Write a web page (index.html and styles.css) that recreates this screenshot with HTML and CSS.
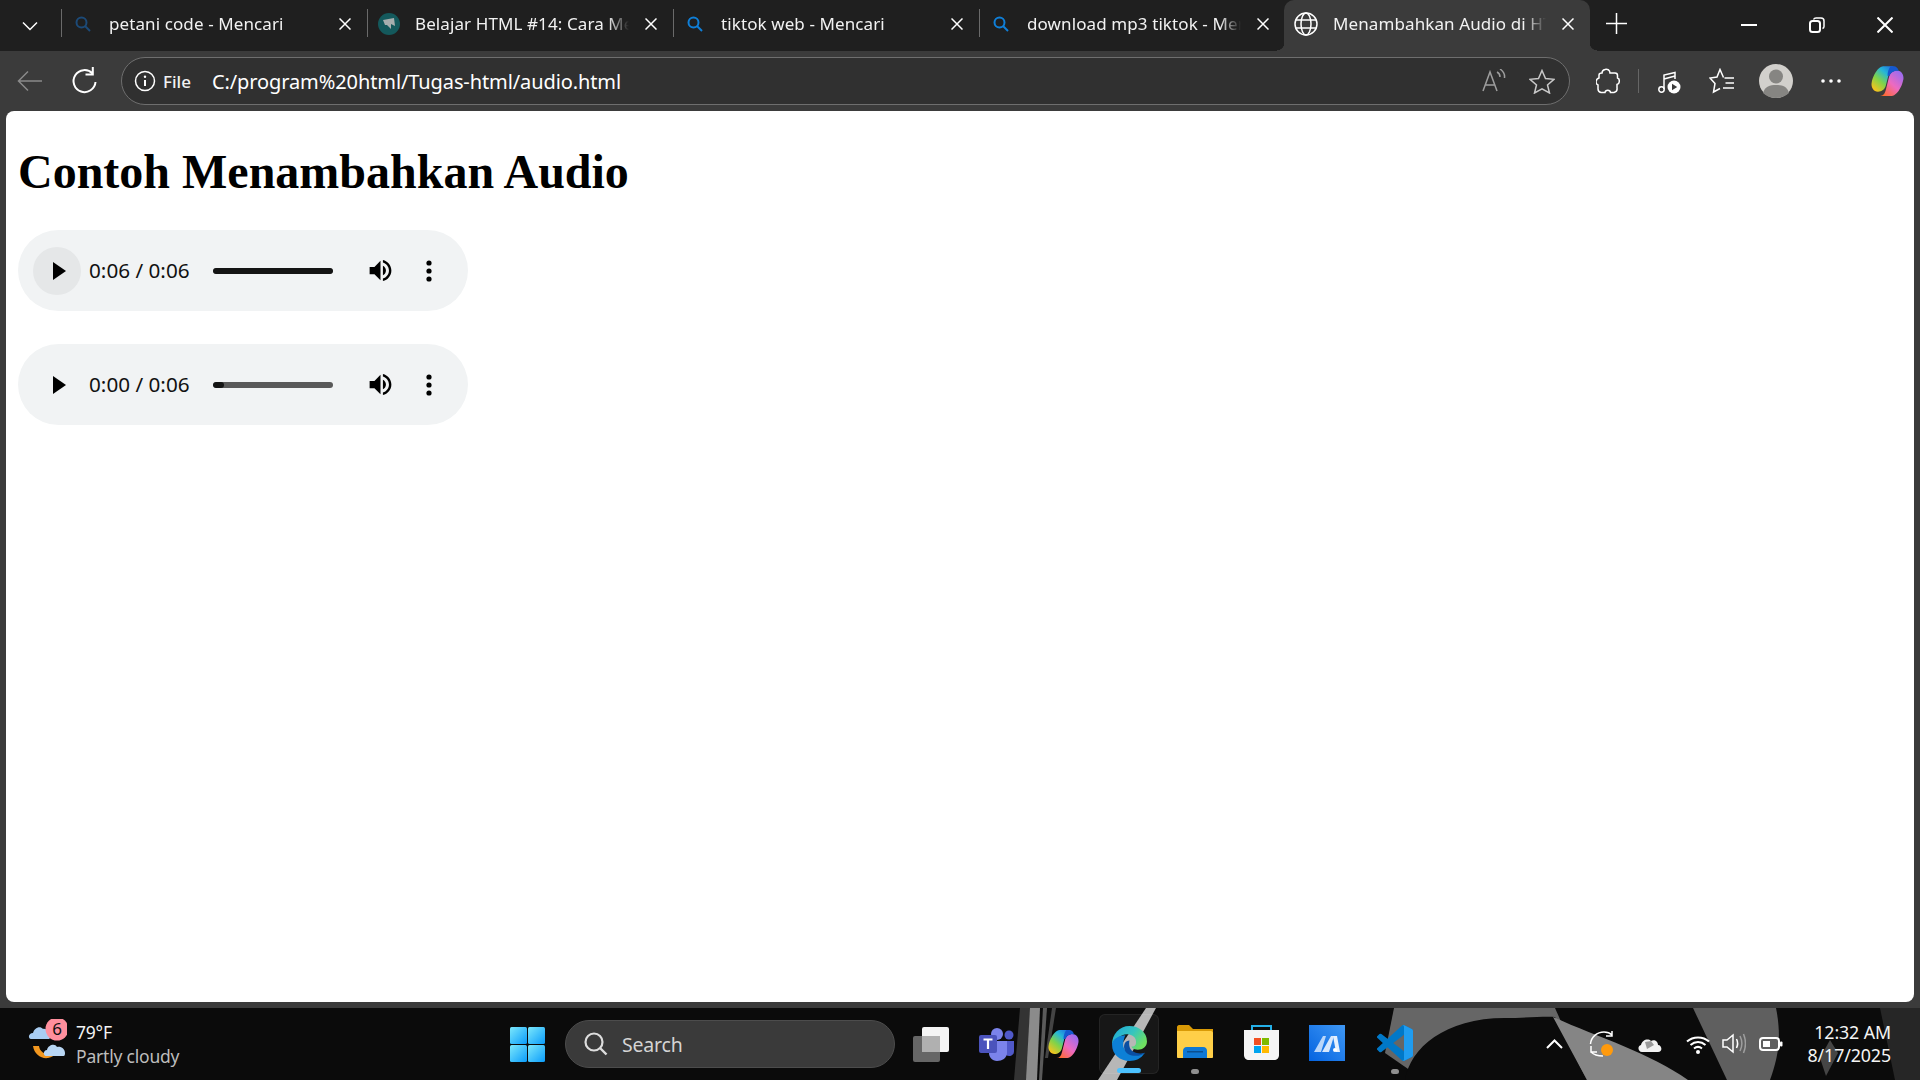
FILE: index.html
```html
<!DOCTYPE html>
<html lang="en">
<head>
<meta charset="utf-8">
<title>Menambahkan Audio di HTML</title>
<link rel="stylesheet" href="styles.css">
</head>
<body>
<svg class="defs" width="0" height="0" aria-hidden="true">
  <defs>
    <linearGradient id="cpA" x1="0.85" y1="0" x2="0.1" y2="0.95">
      <stop offset="0" stop-color="#1f6fe0"/><stop offset="0.3" stop-color="#25b6d8"/><stop offset="0.62" stop-color="#7fd34a"/><stop offset="1" stop-color="#ffc21a"/>
    </linearGradient>
    <linearGradient id="cpB" x1="0.9" y1="0.1" x2="0.15" y2="1">
      <stop offset="0" stop-color="#9a6cf0"/><stop offset="0.5" stop-color="#ee6ac0"/><stop offset="1" stop-color="#ff6a2a"/>
    </linearGradient>
    <linearGradient id="edA" x1="0" y1="0" x2="1" y2="0.6">
      <stop offset="0" stop-color="#1ba6dc"/><stop offset="0.55" stop-color="#35c4c0"/><stop offset="1" stop-color="#6fe060"/>
    </linearGradient>
    <linearGradient id="winG" x1="0" y1="0" x2="1" y2="1">
      <stop offset="0" stop-color="#7ce8fb"/><stop offset="1" stop-color="#0a9cfb"/>
    </linearGradient>
    <linearGradient id="maG" x1="1" y1="0" x2="0" y2="1">
      <stop offset="0" stop-color="#3f98f5"/><stop offset="1" stop-color="#0463e0"/>
    </linearGradient>
    <symbol id="copilot" viewBox="0 0 32 32">
      <path fill="url(#cpA)" d="M12 2H23C20 2 18.500 4 17.500 8L14.500 20C13.500 24 10.500 26 7 26C3 26 .5 22 1 18C2 12 5 7 7.500 4.500C9 3 10.500 2 12 2Z"/>
      <path fill="url(#cpB)" d="M20 30H9C12 30 13.500 28 14.500 24L17.500 12C18.500 8 21.500 6 25 6C29 6 31.500 10 31 14C30 20 27 25 24.500 27.500C23 29 21.500 30 20 30Z"/>
      <path fill="#1558cf" d="M19 2H21C24.500 2 26 4 26.500 6.500C22.500 5.500 19 8 18 11L16 11C16 8 17 4 19 2Z"/>
    </symbol>
  </defs>
</svg>

<div class="browser">
  <header class="tabstrip">
    <div class="tabmenu">
      <svg width="16" height="10" viewBox="0 0 16 10"><path d="M1 1.500 8 8.500 15 1.500" class="ln"/></svg>
    </div>
    <div class="tab">
      <svg class="favicon" viewBox="0 0 16 16"><circle cx="6.500" cy="6.500" r="5" class="srch dim"/><path d="M10 10 15 15" class="srch dim"/></svg>
      <span class="tab-title">petani code - Mencari</span>
      <svg class="tab-x" viewBox="0 0 12 12"><path d="M.5.500 11.500 11.500M11.500.500.500 11.500" class="ln"/></svg>
    </div>
    <div class="tab">
      <svg class="favicon favicon-wide" viewBox="0 0 22 22"><circle cx="11" cy="11" r="11" fill="#14595c"/><path d="M5 7 16 5 17 13 13 11 13 16 9 12 7 12Z" fill="#a7aeae"/></svg>
      <span class="tab-title">Belajar HTML #14: Cara Menambahkan</span>
      <svg class="tab-x" viewBox="0 0 12 12"><path d="M.5.500 11.500 11.500M11.500.500.500 11.500" class="ln"/></svg>
    </div>
    <div class="tab">
      <svg class="favicon" viewBox="0 0 16 16"><circle cx="6.500" cy="6.500" r="5" class="srch"/><path d="M10 10 15 15" class="srch"/></svg>
      <span class="tab-title">tiktok web - Mencari</span>
      <svg class="tab-x" viewBox="0 0 12 12"><path d="M.5.500 11.500 11.500M11.500.500.500 11.500" class="ln"/></svg>
    </div>
    <div class="tab">
      <svg class="favicon" viewBox="0 0 16 16"><circle cx="6.500" cy="6.500" r="5" class="srch"/><path d="M10 10 15 15" class="srch"/></svg>
      <span class="tab-title">download mp3 tiktok - Mencari</span>
      <svg class="tab-x" viewBox="0 0 12 12"><path d="M.5.500 11.500 11.500M11.500.500.500 11.500" class="ln"/></svg>
    </div>
    <div class="tab tab-active">
      <svg class="favicon favicon-globe" viewBox="0 0 24 24"><circle cx="12" cy="12" r="11" class="ln"/><ellipse cx="12" cy="12" rx="5" ry="11" class="ln"/><path d="M1.800 8H22.200M1.800 16H22.200" class="ln"/></svg>
      <span class="tab-title">Menambahkan Audio di HTML</span>
      <svg class="tab-x" viewBox="0 0 12 12"><path d="M.5.500 11.500 11.500M11.500.500.500 11.500" class="ln"/></svg>
    </div>
    <div class="newtab">
      <svg width="21" height="21" viewBox="0 0 21 21"><path d="M10.500 0V21M0 10.500H21" class="ln"/></svg>
    </div>
    <div class="winctl">
      <button class="winbtn"><svg width="16" height="16" viewBox="0 0 16 16"><path d="M0 8H16" class="ln ln2"/></svg></button>
      <button class="winbtn"><svg width="16" height="16" viewBox="0 0 16 16"><rect x="1" y="4" width="10" height="11" rx="2.500" class="ln ln2"/><path d="M4.500 2.500C5 1.500 5.800 1 7 1H12C13.800 1 15 2.200 15 4V9.500C15 10.500 14.500 11.200 13.500 11.500" class="ln"/></svg></button>
      <button class="winbtn"><svg width="16" height="16" viewBox="0 0 16 16"><path d="M.5.500 15.500 15.500M15.500.500.500 15.500" class="ln ln2"/></svg></button>
    </div>
  </header>

  <nav class="toolbar">
    <button class="tool tool-back"><svg width="26" height="22" viewBox="0 0 26 22"><path d="M25 11H2M11 1.500 1.500 11 11 20.500" class="ln dimln"/></svg></button>
    <button class="tool tool-reload"><svg width="26" height="28" viewBox="0 0 26 28"><path d="M21.500 6.500A11 11 0 1 0 24.500 15" class="ln ln2"/><path d="M21.800 0V7.500H14.500" class="ln ln2"/></svg></button>
    <div class="omnibox">
      <svg class="info" width="22" height="22" viewBox="0 0 22 22"><circle cx="11" cy="11" r="9.500" class="ln"/><path d="M11 10V16" class="ln ln2"/><circle cx="11" cy="6.800" r="1.200" fill="#fff"/></svg>
      <span class="scheme">File</span>
      <span class="url">C:/program%20html/Tugas-html/audio.html</span>
      <svg class="omni-read" width="24" height="24" viewBox="0 0 24 24"><path d="M1 22 8 3 15 22M3.500 16H12.500" class="ln faint"/><path d="M15 3C17 4 18 6 18 8M18 0C21 2 23 5 22.500 9" class="ln faint"/></svg>
      <svg class="omni-star" width="26" height="25" viewBox="0 0 26 25"><path d="M13 1.500 16.500 9.500 25 10.300 18.500 16 20.500 24 13 19.800 5.500 24 7.500 16 1 10.300 9.500 9.500Z" class="ln faint2"/></svg>
    </div>
    <div class="tools-right">
      <button class="tool"><svg width="24" height="26" viewBox="0 0 24 26"><path d="M9 1.500C11 .5 14 2 14 5H19C20.500 5 21.500 6 21.500 7.500V10C24 10.500 24 16 21 16.500V20C21.500 23 20 24 18 24.500H14.500C14 21.500 9.500 21.500 9 24.500H5C3 24 2 23 2 21V17C-1 15.500 -.5 11 3 10V7C3 5.500 4 5 6 5 6 3.500 7 2 9 1.500Z" class="ln"/></svg></button>
      <span class="tool-sep"></span>
      <button class="tool"><svg width="25" height="25" viewBox="0 0 25 25"><path d="M7 20V6L18 3.500V10M7 10 18 7" class="ln"/><circle cx="4.500" cy="20.500" r="2.700" class="ln"/><circle cx="17" cy="18" r="6.500" fill="#fff"/><path d="M15 14.800V21.200L20.200 18Z" fill="#3b3b3b"/></svg></button>
      <button class="tool"><svg width="26" height="26" viewBox="0 0 26 26"><path d="M14.500 9.500 11 1.500 8 9 1 10 6 15.500 4.500 24 11 20.500" class="ln"/><path d="M15.500 10H25M16.500 15H25M14 20H25" class="ln"/></svg></button>
      <div class="avatar"><svg width="34" height="34" viewBox="0 0 34 34"><circle cx="17" cy="17" r="17" fill="#d2d0cc"/><circle cx="17" cy="12.500" r="7" fill="#868582"/><path d="M4 29C6 22 11 21 17 21S28 22 30 29C27 32 22 34 17 34S7 32 4 29Z" fill="#868582"/></svg></div>
      <button class="tool tool-more"><svg width="20" height="4" viewBox="0 0 20 4"><circle cx="2" cy="2" r="1.800" fill="#fff"/><circle cx="10" cy="2" r="1.800" fill="#fff"/><circle cx="18" cy="2" r="1.800" fill="#fff"/></svg></button>
      <svg class="tool-copilot" width="35" height="34"><use href="#copilot"/></svg>
    </div>
  </nav>

  <main class="page">
    <h1 class="heading">Contoh Menambahkan Audio</h1>
    <div class="player">
      <span class="play play-hover"><svg width="13" height="18" viewBox="0 0 13 18"><path d="M0 0 13 9 0 18Z"/></svg></span>
      <span class="time">0:06 / 0:06</span>
      <span class="track"><span class="fill fill-full"></span></span>
      <svg class="vol" width="29" height="29" viewBox="0 0 24 24"><path d="M3 9v6h4l5 5V4L7 9H3zm13.500 3c0-1.770-1.020-3.290-2.500-4.030v8.050c1.480-.73 2.500-2.250 2.500-4.020zM14 3.230v2.060c2.890.86 5 3.540 5 6.710s-2.110 5.850-5 6.710v2.060c4.010-.91 7-4.490 7-8.770s-2.990-7.860-7-8.770z"/></svg>
      <svg class="kebab" width="8" height="22" viewBox="0 0 8 22"><circle cx="4" cy="3" r="2.600"/><circle cx="4" cy="11" r="2.600"/><circle cx="4" cy="19" r="2.600"/></svg>
    </div>
    <div class="player">
      <span class="play"><svg width="13" height="18" viewBox="0 0 13 18"><path d="M0 0 13 9 0 18Z"/></svg></span>
      <span class="time">0:00 / 0:06</span>
      <span class="track"><span class="fill fill-start"></span></span>
      <svg class="vol" width="29" height="29" viewBox="0 0 24 24"><path d="M3 9v6h4l5 5V4L7 9H3zm13.500 3c0-1.770-1.020-3.290-2.500-4.030v8.050c1.480-.73 2.500-2.250 2.500-4.020zM14 3.230v2.060c2.890.86 5 3.540 5 6.710s-2.110 5.850-5 6.710v2.060c4.010-.91 7-4.490 7-8.770s-2.990-7.860-7-8.770z"/></svg>
      <svg class="kebab" width="8" height="22" viewBox="0 0 8 22"><circle cx="4" cy="3" r="2.600"/><circle cx="4" cy="11" r="2.600"/><circle cx="4" cy="19" r="2.600"/></svg>
    </div>
  </main>
</div>

<footer class="taskbar">
  <svg class="wallpaper" viewBox="0 0 1920 72" preserveAspectRatio="none" aria-hidden="true">
    <rect width="1920" height="72" fill="#0b0b0b"/>
    <path d="M1020 0H1032L1030 72H1014Z" fill="#333"/>
    <path d="M1030 0H1040L1037 72H1026Z" fill="#8b8b8b"/>
    <path d="M1043 0H1047L1042 72H1039Z" fill="#5a5a5a"/>
    <path d="M1052 0H1056L1048 50H1045Z" fill="#444"/>
    <path d="M1146 0H1156L1117 72H1098Z" fill="#b4b4b4"/>
    <path d="M1394 0H1555L1587 72H1424L1385 45Z" fill="#666"/>
    <path d="M1405 72C1410 40 1445 10 1505 10 1525 10 1545 8 1555 9L1587 72Z" fill="#0b0b0b"/>
    <path d="M1553 9C1600 30 1650 45 1688 72H1587Z" fill="#858585"/>
    <path d="M1693 0H1776C1782 30 1778 50 1770 72H1727Z" fill="#5f5f5f"/>
    <path d="M1830 32 1838 45 1826 68 1820 50Z" fill="#454545"/>
    <path d="M1880 0H1920V72H1895Z" fill="#262626"/>
  </svg>

  <div class="weather">
    <svg class="weather-icon" width="40" height="50" viewBox="0 0 40 50">
      <path d="M6 27C7 35 14 40 21 39 25 38 27 37 29 34 22 37 13 35 12 27Z" fill="#f2971f"/>
      <path d="M4 20C1 20 1 14 6 14 7 9 13 6 16 10 19 9 23 13 23 16 24 20 22 20 21 20Z" fill="#a9cdf2"/>
      <path d="M19 37C16 37 16 31 20 31 21 26 28 24 30 28 34 27 38 30 38 34 38 37 37 37 36 37Z" fill="#b8d6f4"/>
      <circle cx="30" cy="10" r="11.500" fill="#ff8f9d"/>
      <text x="30" y="16" class="badge-num">6</text>
    </svg>
    <div class="weather-text">
      <span class="temp">79°F</span>
      <span class="cond">Partly cloudy</span>
    </div>
  </div>

  <svg class="start" width="35" height="35" viewBox="0 0 35 35">
    <rect x="0" y="0" width="17" height="17" rx="1.500" fill="url(#winG)"/><rect x="18" y="0" width="17" height="17" rx="1.500" fill="url(#winG)"/><rect x="0" y="18" width="17" height="17" rx="1.500" fill="url(#winG)"/><rect x="18" y="18" width="17" height="17" rx="1.500" fill="url(#winG)"/>
  </svg>

  <div class="searchbox">
    <svg width="24" height="24" viewBox="0 0 24 24"><circle cx="10" cy="10" r="8.500" fill="none" stroke="#ddd" stroke-width="2.200"/><path d="M16 16 22.500 22.500" stroke="#ddd" stroke-width="2.400"/></svg>
    <span class="search-label">Search</span>
  </div>

  <div class="apps">
    <svg class="app app-taskview" width="38" height="35" viewBox="0 0 38 35"><rect x="0" y="9" width="27" height="26" rx="2" fill="#666"/><rect x="9" y="0" width="27" height="25" rx="2" fill="#f4f4f4"/><rect x="9" y="9" width="18" height="16" fill="#b0b0b0"/></svg>
    <svg class="app app-teams" width="36" height="33" viewBox="0 0 36 33"><circle cx="18" cy="6" r="6" fill="#7b83eb"/><circle cx="30" cy="7" r="4.500" fill="#5059c9"/><path d="M24 13H35V23C35 28 30 29 27 27Z" fill="#5059c9"/><path d="M10 13H28V25C28 30 23 33 18 33S10 29 10 25Z" fill="#7b83eb"/><rect x="0" y="7" width="18" height="18" rx="2" fill="#4b53bc"/><path d="M4.500 11.500H13.500M9 11.500V21" stroke="#fff" stroke-width="2.200" fill="none"/></svg>
    <svg class="app app-copilot" width="33" height="32"><use href="#copilot"/></svg>
    <div class="app-slot app-slot-active">
      <svg width="37" height="37" viewBox="0 0 36 36">
        <path fill="url(#edA)" d="M18 1C27 1 35 7 35 16 35 21 31 24 26 24 22 24 20 22 20 21 24 21 25 18 24 14 22 9 15 8 11 10 7 12 3 15 1 19 1 9 8 1 18 1Z"/>
        <path fill="#0d80d6" d="M14 10C8 10 1 14 1 19 1 29 9 35 18 35 24 35 29 33 33 27 29 29 24 30 19 28 14 26 11 22 12 17 12.500 14 13 12 14 10Z"/>
        <path fill="#0a4ea2" d="M18 15C14 15 12 19 13 23 14 28 19 30 24 30 28 30 31 29 33 27 30 28 25 28 22 26 18 24 17 19 18 15Z"/>
      </svg>
      <span class="running running-on"></span>
    </div>
    <div class="app-slot">
      <svg width="36" height="33" viewBox="0 0 36 33"><path d="M0 2C0 1 1 0 2 0H12L16 4H36V20H0Z" fill="#d99a06"/><path d="M0 6H34C35 6 36 7 36 8V32C36 32.500 35.500 33 35 33H1C.5 33 0 32.500 0 32Z" fill="#ffcf48"/><path d="M6 33V26C6 24 7 22 10 22H26C29 22 30 24 30 26V33Z" fill="#0f78d4"/><rect x="10" y="26" width="16" height="1.500" fill="#0a4f90"/></svg>
      <span class="running"></span>
    </div>
    <div class="app-slot">
      <svg width="35" height="35" viewBox="0 0 35 35"><path d="M8 6V1H27V6" fill="none" stroke="#24b0e8" stroke-width="2"/><path d="M0 5H35V30C35 33 33 35 30 35H5C2 35 0 33 0 30Z" fill="#f5f5f5"/><rect x="10" y="13" width="7" height="7" fill="#f25022"/><rect x="18" y="13" width="7" height="7" fill="#7fba00"/><rect x="10" y="21" width="7" height="7" fill="#00a4ef"/><rect x="18" y="21" width="7" height="7" fill="#ffb900"/></svg>
      <span class="running running-none"></span>
    </div>
    <div class="app-slot">
      <svg width="36" height="36" viewBox="0 0 36 36"><rect width="36" height="36" fill="url(#maG)"/><path d="M5 27 14 11H17L12 27Z" fill="#b9d6fa"/><path d="M13 27 22 11H25L20 27Z" fill="#d7e7fc"/><path d="M24 11H28L31 27H27Z" fill="#e6f0fd"/><circle cx="26" cy="25" r="2" fill="#fff"/></svg>
      <span class="running running-none"></span>
    </div>
    <div class="app-slot app-slot-code">
      <svg width="36" height="36" viewBox="0 0 100 100"><path fill="#0078c8" d="M96.460 10.800 75.860.9a6.230 6.230 0 0 0-7.100 1.200L29.360 38.040 12.200 25.020a4.160 4.160 0 0 0-5.320.24L1.370 30.270a4.170 4.170 0 0 0 0 6.150L16.250 50 1.370 63.580a4.170 4.170 0 0 0 0 6.150l5.500 5a4.160 4.160 0 0 0 5.320.24l17.170-13.020 39.400 35.940a6.230 6.230 0 0 0 7.100 1.200l20.600-9.900A6.250 6.250 0 0 0 100 83.550V16.450a6.250 6.250 0 0 0-3.540-5.650ZM75 72.700 45.100 50 75 27.300Z"/><path fill="#1f9cf0" d="M96.460 10.800 75.860.9A6.230 6.230 0 0 0 70 1.500 3.600 3.600 0 0 1 75 5v90a3.600 3.600 0 0 1-5 3.500 6.230 6.230 0 0 0 5.860.6l20.600-9.900A6.250 6.250 0 0 0 100 83.550V16.450a6.250 6.250 0 0 0-3.540-5.650Z"/></svg>
      <span class="running"></span>
    </div>
  </div>

  <div class="tray">
    <svg class="tray-chev" width="17" height="10" viewBox="0 0 17 10"><path d="M1 9 8.500 1.500 16 9" class="ln ln2"/></svg>
    <svg class="tray-sync" width="26" height="26" viewBox="0 0 26 26"><path d="M1.500 13C2 6 8 1 15 1 18 1 21 2 23 4M23 0V5H17M2 15V21H8M2 21C5 24 9 25 14 25" class="ln"/><circle cx="18" cy="19" r="6" fill="#ff9a0d"/></svg>
    <svg class="tray-cloud" width="24" height="16" viewBox="0 0 24 16"><path d="M4 16C0 16 -1 10 3 9 4 4 10 2 13 5 16 3 20 5 20 9 24 9 25 16 20 16Z" fill="#f2f2f2"/><path d="M7 6 13 5 16 9 9 13Z" fill="#9a9a9a"/></svg>
    <svg class="tray-wifi" width="24" height="19" viewBox="0 0 24 19"><path d="M1 6.500C7 1 17 1 23 6.500M4.500 10C9 6 15 6 19.500 10M8 13.500C10.500 11.500 13.500 11.500 16 13.500" class="ln ln2"/><circle cx="12" cy="17" r="2" fill="#fff"/></svg>
    <svg class="tray-vol" width="24" height="22" viewBox="0 0 24 22"><path d="M1 7H5L11 2V19L5 14H1Z" class="ln"/><path d="M14.500 6C16 9 16 12 14.500 15" class="ln"/><path d="M18 3C20.500 8 20.500 13 18 18M21.500 1C24 7 24 14 21.500 20" class="ln faint"/></svg>
    <svg class="tray-bat" width="24" height="14" viewBox="0 0 24 14"><rect x="1" y="1" width="19" height="12" rx="3" class="ln ln2"/><rect x="4" y="4" width="7" height="6" fill="#fff"/><rect x="21" y="4.500" width="2.500" height="5" rx="1" fill="#fff"/></svg>
    <div class="clock"><span>12:32 AM</span><span>8/17/2025</span></div>
  </div>
</footer>
</body>
</html>
```

FILE: styles.css
```css
* { box-sizing: border-box; }
html, body { margin: 0; padding: 0; height: 100%; overflow: hidden; }
body {
  display: flex;
  flex-direction: column;
  background: #3b3b3b;
  color: #fff;
  font-family: "Noto Sans", "Open Sans", sans-serif;
}
.defs { position: absolute; }
button { background: none; border: 0; padding: 0; color: inherit; display: flex; align-items: center; justify-content: center; }
svg { display: block; flex: none; }

.ln { fill: none; stroke: #fff; stroke-width: 1.500; }
.ln2 { stroke-width: 2; }
.dimln { stroke: #8a8a8a; }
.faint { stroke: #9e9e9e; }
.faint2 { stroke: #c8c8c8; }
.srch { fill: none; stroke: #0f7fd8; stroke-width: 2; }
.srch.dim { stroke: #1c4a78; }

.browser { flex: 1; display: flex; flex-direction: column; min-height: 0; padding-bottom: 6px; }

/* tab strip */
.tabstrip { height: 51px; background: #1f1f1f; display: flex; align-items: stretch; }
.tabmenu { width: 61px; display: flex; align-items: center; padding-left: 22px; }
.tab {
  width: 306px;
  display: flex;
  align-items: center;
  padding: 0 16px 3px 13px;
  position: relative;
}
.tab::before {
  content: "";
  position: absolute;
  left: 0; top: 9px;
  width: 1px; height: 28px;
  background: #6a6a6a;
}
.favicon { width: 16px; height: 16px; margin-left: 1px; }
.favicon-wide { width: 22px; height: 22px; margin-left: -2px; margin-right: -3px; }
.favicon-globe { width: 24px; height: 24px; margin-left: -3px; margin-right: -3px; }
.tab-title {
  margin-left: 18px;
  margin-right: 16px;
  padding-bottom: 2px;
  flex: 1;
  min-width: 0;
  white-space: nowrap;
  overflow: hidden;
  font-size: 17px;
  letter-spacing: .1px;
  color: #f2f2f2;
  -webkit-mask-image: linear-gradient(to right, #000 90%, transparent 100%);
  mask-image: linear-gradient(to right, #000 90%, transparent 100%);
}
.tab-x { width: 12px; height: 12px; }
.tab-active {
  width: 306px;
  margin-left: -1px;
  background: #3b3b3b;
  border-radius: 10px 10px 0 0;
}
.tab-active::before { display: none; }
.tab-active::after {
  content: "";
  position: absolute;
  left: -7px; right: -7px; bottom: 0;
  height: 8px;
  background:
    radial-gradient(circle at 0 0, #1f1f1f 7px, #3b3b3b 7.500px) left bottom / 7px 8px no-repeat,
    radial-gradient(circle at 100% 0, #1f1f1f 7px, #3b3b3b 7.500px) right bottom / 7px 8px no-repeat;
  z-index: 0;
}
.newtab { margin-left: 16px; display: flex; align-items: center; padding-bottom: 5px; }
.winctl { margin-left: auto; display: flex; align-items: center; padding: 0 27px 2px 0; gap: 52px; }
.winbtn { width: 16px; height: 16px; }

/* toolbar */
.toolbar { height: 60px; display: flex; align-items: center; background: #3b3b3b; padding-right: 15px; }
.tool { width: 26px; height: 30px; }
.tool-back { margin-left: 17px; }
.tool-reload { margin-left: 28px; }
.omnibox {
  margin-left: 24px;
  width: 1449px;
  height: 48px;
  border: 1.500px solid #6e6e6e;
  border-radius: 24px;
  background: #303030;
  display: flex;
  align-items: center;
  padding-left: 12px;
}
.scheme { margin-left: 7px; font-size: 17px; font-weight: 500; color: #f2f2f2; }
.url { margin-left: 21px; font-size: 20px; letter-spacing: -.1px; color: #fff; }
.omni-read { margin-left: auto; }
.omni-star { margin-left: 23px; margin-right: 14px; }
.tools-right { margin-left: 25px; flex: 1; display: flex; align-items: center; }
.tool-sep { width: 1px; height: 24px; background: #666; margin: 0 17px 0 17px; }
.tools-right .tool + .tool { margin-left: 27px; }
.avatar { margin-left: 24px; }
.tools-right .tool-more { margin-left: 25px; }
.tool-copilot { margin-left: auto; }

/* page */
.page {
  flex: 1;
  margin: 0 6px;
  background: #fff;
  border-radius: 8px;
  color: #000;
  padding: 33px 12px 0;
  display: flex;
  flex-direction: column;
  align-items: flex-start;
  gap: 33px;
}
.heading {
  margin: 0 0 -2px;
  font: bold 48px/55px "Liberation Serif", "Times New Roman", serif;
}
.player {
  width: 450px;
  height: 81px;
  border-radius: 41px;
  background: #f1f3f4;
  display: flex;
  align-items: center;
  padding-left: 15px;
}
.play { width: 48px; height: 48px; border-radius: 50%; display: flex; align-items: center; justify-content: center; padding-left: 4px; }
.play-hover { background: #e5e7e8; }
.time { margin-left: 8px; width: 101px; padding-bottom: 2px; font-size: 20.700px; color: #111; white-space: nowrap; }
.track { margin-left: 23px; width: 120px; height: 6px; border-radius: 3px; background: #595959; display: block; overflow: hidden; }
.fill { display: block; height: 100%; background: #141414; border-radius: 3px; }
.fill-full { width: 100%; }
.fill-start { width: 11px; }
.vol { margin-left: 33px; }
.kebab { margin-left: 30px; }

/* taskbar */
.taskbar {
  height: 72px;
  flex: none;
  position: relative;
  display: flex;
  align-items: center;
  background: #0b0b0b;
  overflow: hidden;
}
.wallpaper { position: absolute; inset: 0; width: 100%; height: 100%; }
.taskbar > :not(.wallpaper) { position: relative; }
.weather { margin-left: 27px; width: 483px; display: flex; align-items: center; }
.weather-icon { margin-right: 9px; }
.badge-num { font: 17px "Noto Sans", sans-serif; fill: #111; text-anchor: middle; }
.weather-text { display: flex; flex-direction: column; font-size: 17.500px; line-height: 24px; letter-spacing: -.2px; padding-bottom: 1px; }
.cond { color: #bdbdbd; }
.temp { color: #f4f4f4; }
.start { flex: none; }
.searchbox {
  margin-left: 20px;
  width: 330px;
  height: 48px;
  border-radius: 24px;
  background: #3a3a3a;
  border: 1px solid #4c4c4c;
  display: flex;
  align-items: center;
  padding-left: 18px;
}
.search-label { margin-left: 14px; font-size: 19.500px; letter-spacing: -.2px; color: #d4d4d4; }
.apps { margin-left: 18px; display: flex; align-items: center; }
.app-teams { margin-left: 28px; }
.app-copilot { margin-left: 32px; }
.app-slot {
  width: 60px;
  height: 60px;
  margin-left: 6px;
  display: flex;
  flex-direction: column;
  align-items: center;
  padding-top: 11px;
  position: relative;
}
.app-slot-code { margin-left: 8px; }
.app-slot-active { margin-left: 19px; background: rgba(255,255,255,.05); border: 1px solid rgba(255,255,255,.06); border-radius: 6px; padding-top: 10px; }
.running { position: absolute; left: 26px; bottom: 0; width: 8px; height: 5px; border-radius: 3px; background: #8f8f8f; }
.running-on { left: 17px; width: 24px; background: #4cc2ff; bottom: 0; }
.running-none { display: none; }
.tray { margin-left: auto; display: flex; align-items: center; padding-right: 29px; }
.tray-sync { margin-left: 26px; }
.tray-cloud { margin-left: 23px; }
.tray-wifi { margin-left: 24px; }
.tray-vol { margin-left: 12px; }
.tray-bat { margin-left: 13px; }
.clock { margin-left: 13px; width: 95px; display: flex; flex-direction: column; align-items: flex-end; font-size: 17.800px; line-height: 23px; letter-spacing: -.1px; color: #f4f4f4; white-space: nowrap; }
```
